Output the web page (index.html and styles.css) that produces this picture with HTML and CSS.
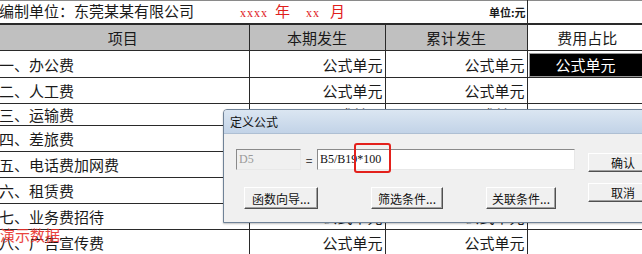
FILE: index.html
```html
<!DOCTYPE html>
<html lang="zh-CN">
<head>
    <meta charset="UTF-8">
    <title>定义公式</title>
    <link rel="stylesheet" href="styles.css">
</head>
<body>
<div class="sheet">
    <table class="grid">
        <colgroup>
            <col class="c1"><col class="c2"><col class="c3"><col class="c4">
        </colgroup>
        <tr class="title-row">
            <td class="company" colspan="2">编制单位：东莞某某有限公司<span class="date"><span class="ph">xxxx</span><span class="yr">年</span><span class="ph">xx</span><span class="mo">月</span></span></td>
            <td class="unit">单位:元</td>
            <td class="blank"></td>
        </tr>
        <tr class="head-row">
            <th>项目</th>
            <th>本期发生</th>
            <th>累计发生</th>
            <th class="plain">费用占比</th>
        </tr>
        <tr><td>一、办公费</td><td class="num">公式单元</td><td class="num">公式单元</td><td class="sel"><div>公式单元</div></td></tr>
        <tr><td>二、人工费</td><td class="num">公式单元</td><td class="num">公式单元</td><td></td></tr>
        <tr class="short"><td>三、运输费</td><td class="num">公式单元</td><td class="num">公式单元</td><td></td></tr>
        <tr><td>四、差旅费</td><td class="num"></td><td class="num"></td><td></td></tr>
        <tr><td>五、电话费加网费</td><td class="num"></td><td class="num"></td><td></td></tr>
        <tr><td>六、租赁费</td><td class="num"></td><td class="num"></td><td></td></tr>
        <tr><td>七、业务费招待</td><td class="num">公式单元</td><td class="num">公式单元</td><td></td></tr>
        <tr><td>八、广告宣传费</td><td class="num">公式单元</td><td class="num">公式单元</td><td></td></tr>
    </table>
    <div class="watermark">演示数据</div>

    <div class="dialog">
        <div class="dlg-title">定义公式</div>
        <div class="dlg-body">
            <div class="dlg-main">
                <div class="formula-row">
                    <div class="cell-ref">D5</div>
                    <span class="eq">=</span>
                    <div class="formula">B5/B19*100</div>
                </div>
                <div class="btn-row">
                    <button class="btn wizard">函数向导...</button>
                    <button class="btn filter">筛选条件...</button>
                    <button class="btn link">关联条件...</button>
                </div>
            </div>
            <div class="dlg-side">
                <button class="btn side">确认</button>
                <button class="btn side">取消</button>
            </div>
        </div>
        <div class="mark"></div>
    </div>
</div>
</body>
</html>
```

FILE: styles.css
```css
body {
    margin: 0;
    width: 642px;
    height: 254px;
    overflow: hidden;
    background: #fff;
    font-family: "Noto Sans CJK SC", "Noto Sans", sans-serif;
    color: #1a1a1a;
}

.sheet {
    position: relative;
    width: 642px;
    height: 254px;
    overflow: hidden;
}

.grid {
    border-collapse: collapse;
    table-layout: fixed;
    width: 650px;
    margin-left: -3px;
    border-top: 1px solid #8a8a8a;
    font-size: 15px;
}

.c1 { width: 252px; }
.c2 { width: 136px; }
.c3 { width: 142px; }
.c4 { width: 120px; }

.grid td,
.grid th {
    height: 25px;
    padding: 0 2px;
    border-bottom: 1px solid #2a2a2a;
    border-right: 1px solid #2a2a2a;
    white-space: nowrap;
    overflow: hidden;
    line-height: 25px;
}

.grid tr.short td {
    height: 21px;
    line-height: 21px;
}

.grid td:last-child,
.grid th:last-child {
    border-right: none;
}

.title-row td {
    height: 20px;
    line-height: 20px;
    border-right: none;
    border-bottom: 2px solid #2a2a2a;
}

.title-row td.unit {
    border-right: 1px solid #2a2a2a;
    text-align: right;
    font-size: 11px;
    font-weight: bold;
    padding-right: 1px;
}

.date {
    color: #e0201c;
    margin-left: 46px;
    font-size: 15px;
}

.date .ph {
    font-family: "Liberation Serif", serif;
    font-size: 12px;
    letter-spacing: 1px;
}

.date .yr {
    margin: 0 16px 0 7px;
}

.date .mo {
    margin-left: 10px;
}

.head-row th {
    background: #c0c0c0;
    font-weight: normal;
    height: 25px;
    line-height: 25px;
    border-bottom: 1px solid #2a2a2a;
}

.head-row th.plain {
    background: #fff;
}

.num {
    text-align: right;
}

.grid td.sel {
    padding: 1px 0 0 1px;
}

.sel div {
    background: #000;
    color: #fff;
    border: 1px solid #9a9a9a;
    height: 22px;
    line-height: 22px;
    text-align: center;
    width: 112px;
}

.watermark {
    position: absolute;
    left: 0;
    top: 224px;
    color: #e8302a;
    font-size: 15px;
    opacity: 0.9;
}

/* dialog */
.dialog {
    position: absolute;
    left: 223px;
    top: 109px;
    width: 440px;
    height: 112px;
    background: #f0f0f0;
    border: 1px solid #6f8297;
    border-radius: 4px 4px 0 0;
    box-shadow: 0 1px 2px rgba(0, 0, 0, 0.25);
    font-size: 12px;
}

.dlg-title {
    height: 23px;
    line-height: 23px;
    padding-left: 6px;
    background: linear-gradient(#dbe6f2, #c2d3e7);
    border-bottom: 1px solid #aebfd3;
    border-radius: 3px 3px 0 0;
    color: #111;
}

.dlg-body {
    display: flex;
    padding: 15px 0 0 12px;
}

.formula-row {
    display: flex;
    align-items: center;
}

.cell-ref,
.formula {
    height: 19px;
    line-height: 19px;
    font-family: "Liberation Serif", serif;
    font-size: 12px;
    padding-left: 2px;
    border: 1px solid;
    border-color: #8a8a8a #e8e8e8 #e8e8e8 #8a8a8a;
}

.cell-ref {
    width: 61px;
    color: #9a9a9a;
    background: #f0f0f0;
}

.eq {
    width: 16px;
    text-align: center;
    font-size: 12px;
}

.formula {
    width: 254px;
    background: #fff;
    color: #111;
}

.btn {
    font-family: "Noto Sans CJK SC", "Noto Sans", sans-serif;
    font-size: 12px;
    color: #111;
    background: #f0f0f0;
    border: 1px solid;
    border-color: #fff #505050 #505050 #fff;
    box-shadow: inset -1px -1px #a0a0a0;
    padding: 0;
    height: 22px;
}

.btn-row {
    display: flex;
    margin-top: 17px;
    padding-left: 8px;
}

.wizard { width: 74px; }
.filter { width: 72px; margin-left: 53px; }
.link { width: 70px; margin-left: 43px; }

.dlg-side {
    display: flex;
    flex-direction: column;
    gap: 11px;
    margin-left: 13px;
    padding-top: 4px;
}

.side {
    width: 70px;
    height: 19px;
    line-height: 15px;
}

.mark {
    position: absolute;
    left: 130px;
    top: 33px;
    width: 33px;
    height: 26px;
    border: 2px solid #e3211c;
    border-radius: 3px;
}
```
